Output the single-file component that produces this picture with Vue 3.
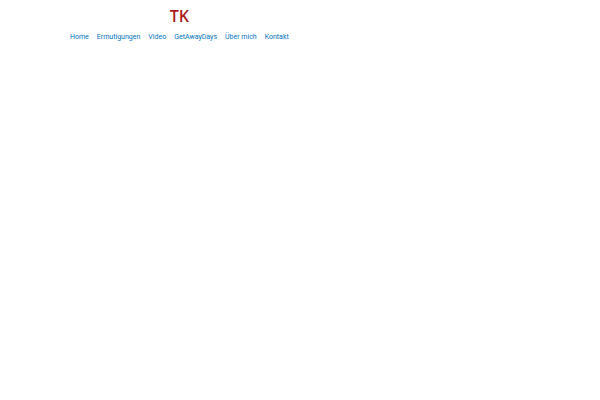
<template>
  <header class="header">
    <a href="#" class="logo">TK</a>
    <nav class="nav">
      <a v-for="item in items" :key="item" href="#" class="nav-link">{{ item }}</a>
    </nav>
  </header>
</template>

<script setup>
const items = ['Home', 'Ermutigungen', 'Video', 'GetAwayDays', 'Über mich', 'Kontakt']
</script>

<style scoped>
.header {
  display: flex;
  flex-direction: column;
  align-items: center;
  width: fit-content;
  margin-left: 66px;
  font-family: Roboto, sans-serif;
}
.logo {
  color: #ab1c1c;
  font-family: 'Open Sans', sans-serif;
  font-size: 16px;
  font-weight: 600;
  line-height: 32px;
  text-decoration: none;
}
.nav {
  display: flex;
}
.nav-link {
  padding: 0 4px;
  color: #0274be;
  font-size: 7px;
  line-height: 10px;
  text-decoration: none;
}
</style>

<style>
body {
  margin: 0;
  background: #fff;
}
</style>
